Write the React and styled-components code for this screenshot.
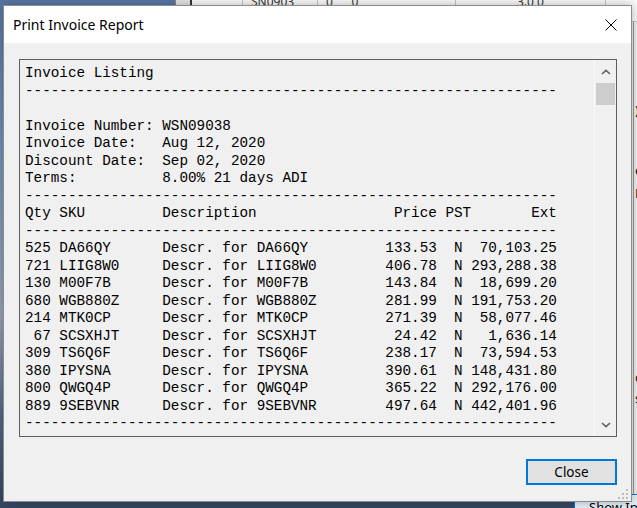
import React from "react";
import styled, { createGlobalStyle } from "styled-components";

const Global = createGlobalStyle`
  html, body { margin: 0; padding: 0; }
  body {
    width: 637px; height: 508px; overflow: hidden;
    background: linear-gradient(180deg, #5877a6 0%, #7393bd 30%, #97a6ba 62%, #55698a 82%, #344862 100%);
    font-family: "Noto Sans", sans-serif;
  }
`;

const Desktop = styled.div`
  position: relative;
  width: 637px;
  height: 508px;
  overflow: hidden;
`;

/* ---------- window behind the dialog ---------- */
const BackWindow = styled.div`
  position: absolute;
  left: 175px;
  top: -19px;
  width: 480px;
  height: 517px;
  box-sizing: border-box;
  background: #f0f0f0;
  border-left: 1px solid #8a8a8a;
  display: flex;
  flex-direction: column;
`;

const GridRow = styled.div`
  display: flex;
  flex: none;
  height: 40px;
  border-bottom: 1px solid #c8c8c8;
`;

const GridCell = styled.div`
  width: ${(p) => p.$w}px;
  flex: none;
  box-sizing: border-box;
  border-right: ${(p) => (p.$thick ? "2px solid #333" : "1px solid #c6c6c6")};
  background: ${(p) => (p.$head ? "#e6e6e6" : "#fbfbfb")};
  display: flex;
  align-items: flex-end;
  padding: 0 0 12px ${(p) => p.$pad || 8}px;
  font: 12px/14px "Noto Sans", sans-serif;
  color: #333;
  white-space: nowrap;
  overflow: hidden;
`;

const BackBody = styled.div`
  flex: 1;
  display: flex;
`;

const BackFill = styled.div`
  width: 457px;
  flex: none;
`;

const SidePanel = styled.div`
  flex: 1;
  border-left: 1px solid #9a9a9a;
  padding-left: 1px;
  display: flex;
  flex-direction: column;
`;

const SideLabel = styled.div`
  margin-top: ${(p) => p.$mt}px;
  font: 13px/16px "Noto Sans", sans-serif;
  color: #111;
  white-space: nowrap;
`;

const ShowButton = styled.div`
  position: absolute;
  left: 574px;
  top: 494px;
  width: 90px;
  height: 30px;
  box-sizing: border-box;
  border: 1px solid #0078d7;
  background: #e5f1fb;
  padding: 4px 0 0 14px;
  font: 13px/16px "Noto Sans", sans-serif;
  color: #000;
  white-space: nowrap;
`;

/* ---------- dialog ---------- */
const Dialog = styled.div`
  position: absolute;
  left: 3px;
  top: 5px;
  width: 629px;
  height: 497px;
  box-sizing: border-box;
  border: 1px solid #8c8c8c;
  box-shadow: 0 0 10px rgba(0, 0, 0, 0.3);
  background: #f0f0f0;
  display: flex;
  flex-direction: column;
`;

const TitleBar = styled.div`
  flex: none;
  height: 37px;
  background: #ffffff;
  display: flex;
  align-items: center;
  justify-content: space-between;
  padding-left: 9px;
`;

const Title = styled.span`
  font-family: "Noto Sans", sans-serif;
  font-size: 14px;
  color: #000;
`;

const CloseX = styled.div`
  width: 40px;
  height: 37px;
  display: flex;
  align-items: center;
  justify-content: center;
`;

const Client = styled.div`
  flex: 1;
  display: flex;
  flex-direction: column;
  padding: 16px 14px 17px 15px;
`;

const TextBox = styled.div`
  height: 378px;
  flex: none;
  box-sizing: border-box;
  border: 1px solid #5e5e5e;
  background: #f0f0f0;
  display: flex;
`;

const Report = styled.pre`
  flex: 1;
  margin: 0;
  padding: 5px 0 0 5px;
  font-family: "Liberation Mono", "Courier New", monospace;
  font-size: 14.3px;
  line-height: 17.5px;
  color: #000;
  white-space: pre;
  overflow: hidden;
`;

const ScrollBar = styled.div`
  width: 22px;
  flex: none;
  box-sizing: border-box;
  border-left: 1px solid #fafafa;
  background: #f0f0f0;
  display: flex;
  flex-direction: column;
`;

const ArrowBtn = styled.div`
  height: 23px;
  flex: none;
  display: flex;
  align-items: center;
  justify-content: center;
`;

const Track = styled.div`
  flex: 1;
  display: flex;
  flex-direction: column;
  align-items: center;
`;

const Thumb = styled.div`
  width: 19px;
  height: 22px;
  background: #cdcdcd;
`;

const Footer = styled.div`
  margin-top: 22px;
  display: flex;
  justify-content: flex-end;
`;

const Button = styled.button`
  width: 91px;
  height: 26px;
  box-sizing: border-box;
  border: 2px solid #0078d7;
  background: #e1e1e1;
  font-family: "Noto Sans", sans-serif;
  font-size: 13.5px;
  color: #000;
  padding: 0;
`;

const Grip = styled.svg`
  position: absolute;
  right: 2px;
  bottom: 1px;
`;

/* ---------- data ---------- */
const rows = [
  ["525", "DA66QY", "133.53", "70,103.25"],
  ["721", "LIIG8W0", "406.78", "293,288.38"],
  ["130", "M00F7B", "143.84", "18,699.20"],
  ["680", "WGB880Z", "281.99", "191,753.20"],
  ["214", "MTK0CP", "271.39", "58,077.46"],
  ["67", "SCSXHJT", "24.42", "1,636.14"],
  ["309", "TS6Q6F", "238.17", "73,594.53"],
  ["380", "IPYSNA", "390.61", "148,431.80"],
  ["800", "QWGQ4P", "365.22", "292,176.00"],
  ["889", "9SEBVNR", "497.64", "442,401.96"],
];

const dash = "-".repeat(62);
const header =
  "Qty SKU".padEnd(16) + "Description".padEnd(27) + "Price" + " PST" + "Ext".padStart(10);

const lines = [
  "Invoice Listing",
  dash,
  "",
  "Invoice Number: WSN09038",
  "Invoice Date:   Aug 12, 2020",
  "Discount Date:  Sep 02, 2020",
  "Terms:          8.00% 21 days ADI",
  dash,
  header,
  dash,
  ...rows.map(
    ([q, s, p, e]) =>
      q.padStart(3) +
      " " +
      s.padEnd(12) +
      ("Descr. for " + s).padEnd(25) +
      p.padStart(7) +
      "  N " +
      e.padStart(10)
  ),
  dash,
  "",
  "                                   Invoice Total:  1,680,462.92",
  "",
];

const Chevron = ({ up }) => (
  <svg width="10" height="6" viewBox="0 0 10 6">
    <polyline
      points={up ? "1,5 5,1.3 9,5" : "1,1 5,4.7 9,1"}
      fill="none"
      stroke="#606060"
      strokeWidth="1.6"
    />
  </svg>
);

export default function App() {
  return (
    <Desktop>
      <Global />
      <BackWindow>
        <GridRow>
          <GridCell $w={16} $head $thick $pad={2} />
          <GridCell $w={51} />
          <GridCell $w={75}>SN0903</GridCell>
          <GridCell $w={138}>0&nbsp;&nbsp;&nbsp;&nbsp;&nbsp;&nbsp;0</GridCell>
          <GridCell $w={150} $pad={61}>3.0&nbsp;0</GridCell>
          <GridCell $w={60} />
        </GridRow>
        <BackBody>
          <BackFill />
          <SidePanel>
            <SideLabel $mt={80}>)</SideLabel>
            <SideLabel $mt={44}>e</SideLabel>
            <SideLabel $mt={7}>N</SideLabel>
            <SideLabel $mt={168}>d</SideLabel>
            <SideLabel $mt={5}>s</SideLabel>
          </SidePanel>
        </BackBody>
      </BackWindow>
      <ShowButton>Show Invoice</ShowButton>

      <Dialog>
        <TitleBar>
          <Title>Print Invoice Report</Title>
          <CloseX>
            <svg width="12" height="12" viewBox="0 0 12 12">
              <path d="M0.5 0.5 L11.5 11.5 M11.5 0.5 L0.5 11.5" stroke="#000" strokeWidth="1" fill="none" />
            </svg>
          </CloseX>
        </TitleBar>
        <Client>
          <TextBox>
            <Report>{lines.join("\n")}</Report>
            <ScrollBar>
              <ArrowBtn>
                <Chevron up />
              </ArrowBtn>
              <Track>
                <Thumb />
              </Track>
              <ArrowBtn>
                <Chevron />
              </ArrowBtn>
            </ScrollBar>
          </TextBox>
          <Footer>
            <Button>Close</Button>
          </Footer>
        </Client>
        <Grip width="11" height="11" viewBox="0 0 11 11">
          <rect x="8" y="0" width="2" height="2" fill="#bdbdbd" />
          <rect x="4" y="4" width="2" height="2" fill="#bdbdbd" />
          <rect x="8" y="4" width="2" height="2" fill="#bdbdbd" />
          <rect x="0" y="8" width="2" height="2" fill="#bdbdbd" />
          <rect x="4" y="8" width="2" height="2" fill="#bdbdbd" />
          <rect x="8" y="8" width="2" height="2" fill="#bdbdbd" />
        </Grip>
      </Dialog>
    </Desktop>
  );
}
